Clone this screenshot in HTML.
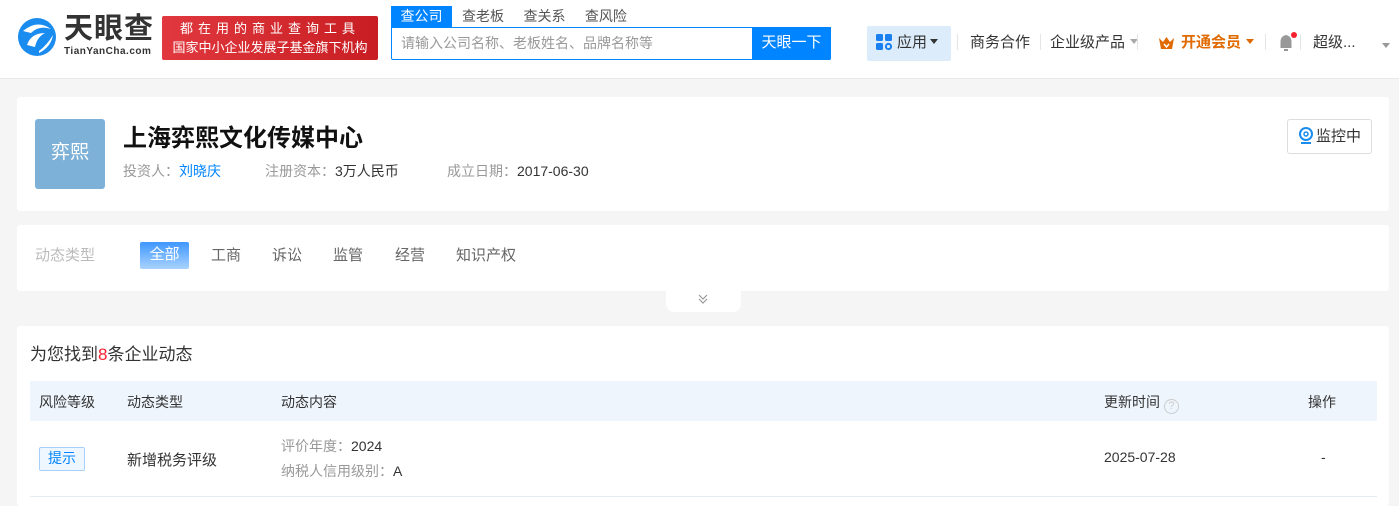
<!DOCTYPE html>
<html><head><meta charset="utf-8"><style>
*{margin:0;padding:0;box-sizing:border-box}
body{width:1399px;height:499px;overflow:hidden;background:#f5f5f5;font-family:"Liberation Sans","Noto Sans CJK SC",sans-serif;color:#333;position:relative}
.a{position:absolute}
.hdr{left:0;top:0;width:1399px;height:79px;background:#fff;border-bottom:1px solid #e8e8e8}
.card{background:#fff;border-radius:3px;left:17px;width:1372px}
.sep{width:1px;height:16px;background:#e5e5e5;top:34px}
.tri{display:inline-block;width:0;height:0;border-left:4px solid transparent;border-right:4px solid transparent;border-top:5px solid #333;vertical-align:3px;margin-left:3px}
</style></head><body>
<div class="a hdr">
 <svg class="a" style="left:17px;top:17px" width="40" height="40" viewBox="0 0 40 40"><circle cx="20" cy="20" r="19" fill="#1a8cf0"/><path d="M6 14 Q20 2 34 12 Q22 8 14 16 Z" fill="#fff"/><path d="M10 28 Q14 16 28 16 Q20 20 18 30 Z" fill="#fff"/><path d="M22 34 Q30 28 36 18 Q34 30 22 36Z" fill="#fff"/></svg>
 <div class="a" style="left:64px;top:12px;font-size:29px;font-weight:bold;color:#333;letter-spacing:1px;line-height:34px">天眼查</div>
 <div class="a" style="left:64px;top:46px;font-size:10px;color:#333;font-weight:bold;letter-spacing:.5px">TianYanCha.com</div>
 <div class="a" style="left:162px;top:16px;width:216px;height:44px;background:linear-gradient(90deg,#e0383e,#c81e23);border-radius:2px;color:#fff;font-size:13px;text-align:center;line-height:19px;padding-top:3px"><div style="letter-spacing:5px">都在用的商业查询工具</div><div>国家中小企业发展子基金旗下机构</div></div>
 <div class="a" style="left:391px;top:6px;width:61px;height:21px;background:#0084ff;color:#fff;font-size:14px;text-align:center;line-height:20px">查公司</div>
 <div class="a" style="left:462px;top:6px;font-size:14px;color:#555;line-height:20px">查老板&nbsp;&nbsp;&nbsp;&nbsp;&nbsp;查关系&nbsp;&nbsp;&nbsp;&nbsp;&nbsp;查风险</div>
 <div class="a" style="left:391px;top:27px;width:440px;height:33px;border:1px solid #0084ff;border-radius:0 0 2px 2px"></div>
 <div class="a" style="left:401px;top:33px;font-size:14px;color:#999">请输入公司名称、老板姓名、品牌名称等</div>
 <div class="a" style="left:752px;top:27px;width:79px;height:33px;background:#0084ff;color:#fff;font-size:15px;text-align:center;line-height:31px;border-radius:0 0 2px 0">天眼一下</div>
 <div class="a" style="left:867px;top:26px;width:84px;height:35px;background:#dcecfb;border-radius:2px"></div>
 <svg class="a" style="left:876px;top:34px" width="17" height="17" viewBox="0 0 17 17"><rect x="0" y="0" width="7" height="7" rx="1.5" fill="#1a7ff0"/><rect x="9" y="0" width="7" height="7" rx="1.5" fill="#1a7ff0"/><rect x="0" y="9" width="7" height="7" rx="1.5" fill="#1a7ff0"/><circle cx="12.5" cy="12.5" r="2.6" fill="none" stroke="#1a7ff0" stroke-width="2"/></svg>
 <div class="a" style="left:897px;top:31px;font-size:15px;color:#333">应用<span class="tri"></span></div>
 <div class="a sep" style="left:957px"></div>
 <div class="a" style="left:970px;top:31px;font-size:15px;color:#333">商务合作</div>
 <div class="a sep" style="left:1040px"></div>
 <div class="a" style="left:1050px;top:31px;font-size:15px;color:#333">企业级产品<span class="tri" style="border-top-color:#aaa;margin-left:5px"></span></div>
 <div class="a sep" style="left:1137px"></div>
 <svg class="a" style="left:1158px;top:36px" width="17" height="14" viewBox="0 0 17 14"><path d="M1 2 L5 6 L8.5 1 L12 6 L16 2 L14 13 L3 13 Z" fill="#e06a00"/><path d="M6 8 L8.5 11 L11 8" stroke="#fff" stroke-width="1.5" fill="none"/></svg>
 <div class="a" style="left:1181px;top:31px;font-size:15px;color:#e06a00;font-weight:bold">开通会员<span class="tri" style="border-top-color:#e06a00;margin-left:5px"></span></div>
 <div class="a sep" style="left:1265px"></div>
 <svg class="a" style="left:1277px;top:31px" width="22" height="22" viewBox="0 0 22 22"><path d="M9 4 Q3.5 5 3.5 11 L3.5 17 L14.5 17 L14.5 11 Q14.5 5 9 4Z" fill="#999"/><rect x="7" y="18" width="4" height="2" fill="#999"/><circle cx="17" cy="4" r="3" fill="#f5222d"/></svg>
 <div class="a sep" style="left:1300px"></div>
 <div class="a" style="left:1313px;top:31px;font-size:15px;color:#333">超级...</div>
 <div class="a" style="left:1379px;top:38px"><span class="tri" style="border-top-color:#999"></span></div>
</div>

<div class="a card" style="top:97px;height:114px"></div>
<div class="a" style="left:35px;top:119px;width:70px;height:70px;background:#7eb1d8;border-radius:3px;color:#fff;font-size:19px;text-align:center;line-height:68px">弈熙</div>
<div class="a" style="left:123px;top:118px;font-size:24px;font-weight:bold;color:#111">上海弈熙文化传媒中心</div>
<div class="a" style="left:123px;top:161px;font-size:14px;color:#999">投资人：<span style="color:#0084ff">刘晓庆</span></div>
<div class="a" style="left:265px;top:161px;font-size:14px;color:#999">注册资本：<span style="color:#333">3万人民币</span></div>
<div class="a" style="left:447px;top:161px;font-size:14px;color:#999">成立日期：<span style="color:#333">2017-06-30</span></div>
<div class="a" style="left:1287px;top:119px;width:85px;height:35px;border:1px solid #ddd;border-radius:3px"></div>
<svg class="a" style="left:1298px;top:127px" width="16" height="17" viewBox="0 0 16 17"><circle cx="8" cy="7" r="6" fill="none" stroke="#1a8cf0" stroke-width="2"/><circle cx="8" cy="7" r="2" fill="none" stroke="#1a8cf0" stroke-width="1.5"/><path d="M3 16 h10" stroke="#1a8cf0" stroke-width="2"/></svg>
<div class="a" style="left:1316px;top:125px;font-size:15px;color:#333">监控中</div>

<div class="a card" style="top:225px;height:66px"></div>
<div class="a" style="left:666px;top:289px;width:75px;height:23px;background:#fff;border-radius:0 0 8px 8px"></div>
<svg class="a" style="left:697px;top:293px" width="12" height="12" viewBox="0 0 12 12"><path d="M2 2 L6 6 L10 2 M2 6 L6 10 L10 6" stroke="#999" stroke-width="1.2" fill="none"/></svg>
<div class="a" style="left:35px;top:244px;font-size:15px;color:#bbb">动态类型</div>
<div class="a" style="left:140px;top:242px;width:49px;height:27px;border-radius:2px;background:linear-gradient(#3f97ff,#a9d3ff);color:#fff;font-size:15px;text-align:center;line-height:25px">全部</div>
<div class="a" style="left:211px;top:244px;font-size:15px;color:#666">工商</div>
<div class="a" style="left:272px;top:244px;font-size:15px;color:#666">诉讼</div>
<div class="a" style="left:333px;top:244px;font-size:15px;color:#666">监管</div>
<div class="a" style="left:395px;top:244px;font-size:15px;color:#666">经营</div>
<div class="a" style="left:456px;top:244px;font-size:15px;color:#666">知识产权</div>

<div class="a card" style="top:326px;height:180px"></div>
<div class="a" style="left:30px;top:340px;font-size:17px;color:#333">为您找到<span style="color:#f5222d">8</span>条企业动态</div>
<div class="a" style="left:30px;top:381px;width:1347px;height:40px;background:#eef5fd"></div>
<div class="a" style="left:39px;top:392px;font-size:14px;color:#333">风险等级</div>
<div class="a" style="left:127px;top:392px;font-size:14px;color:#333">动态类型</div>
<div class="a" style="left:281px;top:392px;font-size:14px;color:#333">动态内容</div>
<div class="a" style="left:1104px;top:392px;font-size:14px;color:#333">更新时间 <span style="display:inline-block;width:15px;height:15px;border:1px solid #ccc;border-radius:50%;color:#ccc;font-size:11px;text-align:center;line-height:13px;vertical-align:-2px">?</span></div>
<div class="a" style="left:1308px;top:392px;font-size:14px;color:#333">操作</div>
<div class="a" style="left:39px;top:447px;width:46px;height:24px;border:1px solid #a8d0fb;background:#eef6ff;border-radius:2px;color:#0084ff;font-size:14px;text-align:center;line-height:21px">提示</div>
<div class="a" style="left:127px;top:449px;font-size:15px;color:#333">新增税务评级</div>
<div class="a" style="left:281px;top:436px;font-size:14px;color:#999">评价年度：<span style="color:#333">2024</span></div>
<div class="a" style="left:281px;top:461px;font-size:14px;color:#999">纳税人信用级别：<span style="color:#333">A</span></div>
<div class="a" style="left:1104px;top:449px;font-size:14px;color:#333">2025-07-28</div>
<div class="a" style="left:1321px;top:449px;font-size:14px;color:#333">-</div>
<div class="a" style="left:30px;top:496px;width:1347px;height:1px;background:#e3ecf5"></div>
</body></html>
